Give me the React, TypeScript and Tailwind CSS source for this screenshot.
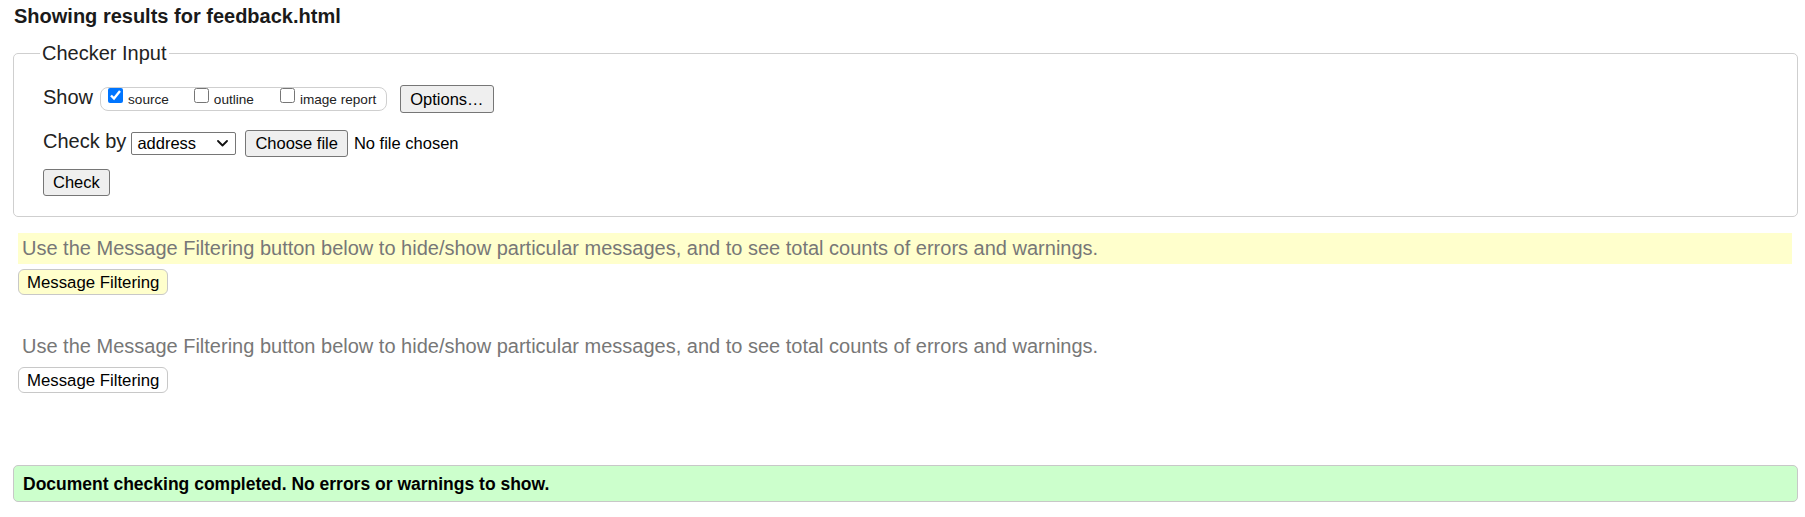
import React from "react";

const btn =
  "inline-flex items-center bg-[#efefef] border border-[#767676] rounded-[3px] text-black text-[16.5px] leading-[19px]";

export default function App() {
  return (
    <div className="w-[1805px] h-[517px] bg-white font-['Liberation_Sans',Arial,sans-serif] text-[#222]">
      <h2 className="pt-[5px] pl-[14px] text-[20px] leading-[23px] font-bold text-[#1a1a1a]">
        Showing results for feedback.html
      </h2>

      <fieldset className="mt-[14px] ml-[13px] mr-[7px] border border-[#cfcfcf] rounded-[5px] pb-[20px]">
        <legend className="ml-[26px] px-[2px] text-[20px] leading-[23px] text-[#222]">
          Checker Input
        </legend>
        <div className="pl-[29px] pt-[20px]">
          {/* Show row */}
          <div className="flex items-center h-[28px]">
            <span className="text-[20px] leading-[23px] mb-[4px]">Show</span>
            <div className="ml-[7px] h-[24px] border border-[#cfcfcf] rounded-[8px] inline-flex items-center pl-[7px] pr-[10px] text-[13.6px] leading-[15px]">
              <input
                type="checkbox"
                defaultChecked
                className="m-0 mb-[7px] w-[15px] h-[15px] accent-[#0075ff]"
              />
              <span className="ml-[5px]">source</span>
              <input
                type="checkbox"
                className="m-0 mb-[7px] ml-[25px] w-[15px] h-[15px] accent-[#0075ff]"
              />
              <span className="ml-[5px]">outline</span>
              <input
                type="checkbox"
                className="m-0 mb-[7px] ml-[26px] w-[15px] h-[15px] accent-[#0075ff]"
              />
              <span className="ml-[5px]">image report</span>
            </div>
            <button className={`${btn} ml-[13px] h-[28px] px-[9px]`}>Options…</button>
          </div>

          {/* Check by row */}
          <div className="flex items-center h-[27px] mt-[17px]">
            <span className="text-[20px] leading-[23px] mb-[4px]">Check by</span>
            <div className="ml-[5px] w-[105px] h-[23px] border border-[#767676] rounded-[2px] flex items-center justify-between pl-[5px] pr-[7px] text-[16.5px] leading-[19px] text-black bg-white">
              <span>address</span>
              <svg width="11" height="7" viewBox="0 0 11 7" fill="none">
                <polyline
                  points="1,1 5.5,5.5 10,1"
                  stroke="#111"
                  strokeWidth="1.8"
                  strokeLinecap="round"
                  strokeLinejoin="round"
                />
              </svg>
            </div>
            <button className={`${btn} ml-[9px] h-[27px] px-[9px]`}>Choose file</button>
            <span className="ml-[6px] text-[16.5px] leading-[19px] text-black">No file chosen</span>
          </div>

          {/* Check row */}
          <div className="flex items-center h-[27px] mt-[12px]">
            <button className={`${btn} h-[27px] px-[9px]`}>Check</button>
          </div>
        </div>
      </fieldset>

      {/* First message block */}
      <div className="mt-[16px] ml-[18px] mr-[13px] h-[31px] bg-[#ffffcc] pl-[4px] flex items-center text-[20px] leading-[23px] text-[#777]">
        Use the Message Filtering button below to hide/show particular messages, and to see total counts of errors and warnings.
      </div>
      <div className="mt-[5px] ml-[18px]">
        <button className="h-[26px] px-[8px] border border-[#c8c8c8] rounded-[6px] bg-[#ffffcc] text-black text-[16.8px] leading-[19px]">
          Message Filtering
        </button>
      </div>

      {/* Second message block */}
      <div className="mt-[36px] ml-[18px] mr-[13px] h-[31px] pl-[4px] flex items-center text-[20px] leading-[23px] text-[#777]">
        Use the Message Filtering button below to hide/show particular messages, and to see total counts of errors and warnings.
      </div>
      <div className="mt-[5px] ml-[18px]">
        <button className="h-[26px] px-[8px] border border-[#c8c8c8] rounded-[6px] bg-white text-black text-[16.8px] leading-[19px]">
          Message Filtering
        </button>
      </div>

      {/* Completed */}
      <div className="mt-[72px] ml-[13px] mr-[7px] h-[37px] border border-[#c8c8c8] rounded-[5px] bg-[#ccffcc] pl-[9px] flex items-center text-[17.5px] leading-[20px] font-bold text-black">
        Document checking completed. No errors or warnings to show.
      </div>
    </div>
  );
}
